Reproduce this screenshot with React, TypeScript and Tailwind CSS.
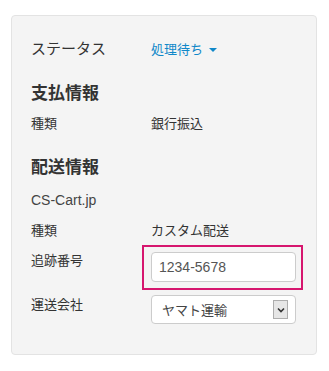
import React from "react";

const jp = { fontFamily: '"Liberation Sans", "Noto Sans CJK JP", sans-serif' };

export default function App() {
  return (
    <div className="w-[329px] h-[371px] bg-white pt-[15px] pl-[11px]" style={jp}>
      <div className="w-[306px] h-[340px] border border-[#e3e3e3] rounded-[4px] bg-[#f4f4f4] pl-[19px] text-[#333]">
        <div className="mt-[18px] h-[30px] flex items-center">
          <div className="w-[120px] text-[15px]">ステータス</div>
          <div className="flex items-center text-[13px] text-[#1088c9] pt-[2px]">
            処理待ち
            <span className="ml-[6px] w-0 h-0 border-l-[4px] border-r-[4px] border-t-[4px] border-l-transparent border-r-transparent border-t-[#1088c9]" />
          </div>
        </div>
        <div className="mt-[17px] h-[25px] flex items-center text-[17px] font-bold">支払情報</div>
        <div className="mt-[6px] h-[24px] flex items-center text-[13px]">
          <div className="w-[120px]">種類</div>
          <div>銀行振込</div>
        </div>
        <div className="mt-[19px] h-[25px] flex items-center text-[17px] font-bold">配送情報</div>
        <div className="mt-[8px] h-[24px] flex items-center text-[14px] text-[#444]">CS-Cart.jp</div>
        <div className="mt-[6px] h-[25px] flex items-center text-[13px]">
          <div className="w-[120px]">種類</div>
          <div>カスタム配送</div>
        </div>
        <div className="mt-[9px] flex items-start text-[13px]">
          <div className="w-[120px] leading-[18px]">追跡番号</div>
          <div className="relative">
            <div className="absolute left-[-9px] top-[-7px] w-[161px] h-[45px] border-2 border-[#d6166e] pointer-events-none" />
            <div className="w-[145px] h-[30px] bg-white border border-[#cccccc] rounded-[4px] flex items-center pl-[7px] text-[14px] text-[#555]">
              1234-5678
            </div>
          </div>
        </div>
        <div className="mt-[13px] flex items-start text-[13px]">
          <div className="w-[120px] leading-[18px] mt-[1px]">運送会社</div>
          <div className="w-[145px] h-[29px] bg-white border border-[#cccccc] rounded-[4px] flex items-center justify-between pl-[10px] pr-[7px] text-[13px] text-[#444]">
            <span className="pt-[2px]">ヤマト運輸</span>
            <span className="w-[15px] h-[19px] bg-[#e6e6e6] border border-[#adadad] flex items-center justify-center">
              <svg width="8" height="6" viewBox="0 0 8 6">
                <path d="M1 1.5 L4 4.5 L7 1.5" stroke="#333" strokeWidth="1.6" fill="none" />
              </svg>
            </span>
          </div>
        </div>
      </div>
    </div>
  );
}
